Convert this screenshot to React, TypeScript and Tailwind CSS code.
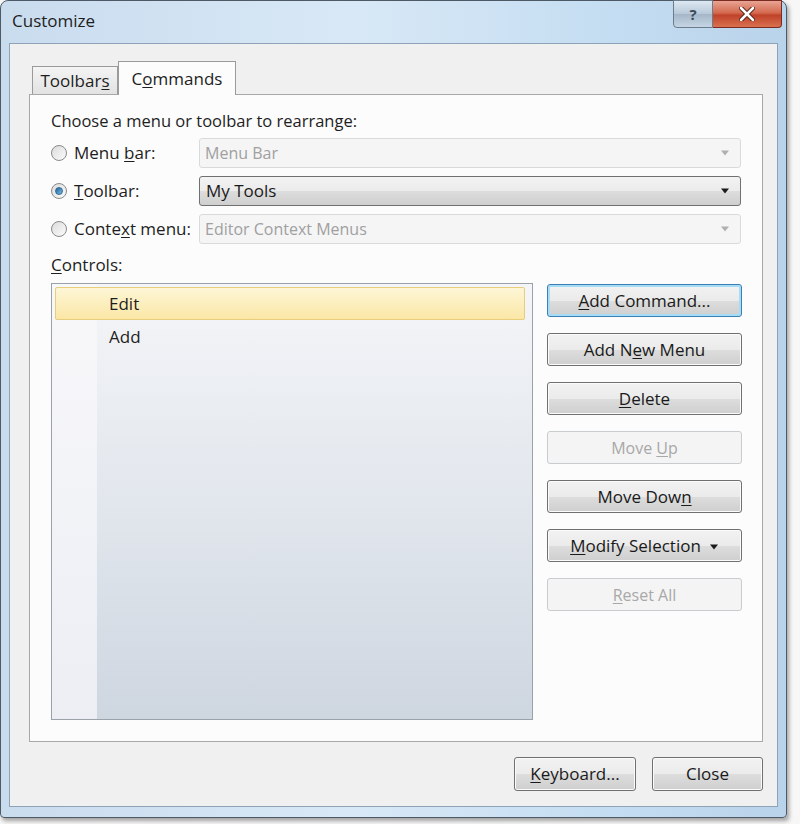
const font = { fontFamily: '"Open Sans", "Noto Sans", sans-serif' };

const U = ({ children }: { children: string }) => <span className="underline underline-offset-2">{children}</span>;

const Radio = ({ checked }: { checked?: boolean }) => (
  <span className="w-[16px] h-[16px] rounded-full border border-[#8a8a8a] bg-gradient-to-br from-[#dcdcdc] to-[#fbfbfb] flex items-center justify-center shrink-0">
    {checked && <span className="w-[8px] h-[8px] rounded-full bg-gradient-to-br from-[#1f5f8f] to-[#7ec0ea] border border-[#2d6c9c]" />}
  </span>
);

const Caret = ({ dim, className = "" }: { dim?: boolean; className?: string }) => (
  <svg width="10" height="6" viewBox="0 0 10 6" className={`shrink-0 ${className}`}>
    <path d="M1 0.5 L9 0.5 L5 5.5 Z" fill={dim ? "#b0b0b0" : "#1a1a1a"} />
  </svg>
);

const Select = ({ value, enabled }: { value: string; enabled?: boolean }) =>
  enabled ? (
    <div className="w-[542px] h-[30px] rounded-[3px] border border-[#707070] bg-[linear-gradient(#f3f3f3_0%,#ebebeb_50%,#dddddd_51%,#cfcfcf_100%)] flex items-center justify-between pl-[6px] pr-[10px] text-[17px] text-[#1a1a1a]">
      <span>{value}</span>
      <Caret />
    </div>
  ) : (
    <div className="w-[542px] h-[30px] rounded-[3px] border border-[#dadada] bg-[#f5f5f5] flex items-center justify-between pl-[5px] pr-[10px] text-[16px] text-[#a0a0a0]">
      <span>{value}</span>
      <Caret dim />
    </div>
  );

type BtnProps = { children: React.ReactNode; disabled?: boolean; focused?: boolean; className?: string };

const Btn = ({ children, disabled, focused, className = "" }: BtnProps) => {
  if (disabled)
    return (
      <div className={`h-[33px] rounded-[3px] border border-[#c9ccce] bg-[#f4f4f4] flex items-center justify-center text-[16px] text-[#a8a8a8] ${className}`}>
        <span>{children}</span>
      </div>
    );
  return (
    <div
      className={`h-[33px] rounded-[3px] border ${focused ? "border-[#3c7fb1] shadow-[inset_0_0_0_2px_#a6dcf5]" : "border-[#707070] shadow-[inset_0_0_0_1px_#fbfbfb]"} bg-[linear-gradient(#f2f2f2_0%,#ebebeb_50%,#dddddd_51%,#cfcfcf_100%)] flex items-center justify-center text-[17px] text-[#1a1a1a] ${className}`}
    >
      <span>{children}</span>
    </div>
  );
};

export default function App() {
  return (
    <div className="w-[800px] h-[824px] bg-[#f7f7f7] overflow-hidden" style={font}>
      <div className="w-[787px] h-[818px] rounded-t-[8px] rounded-b-[4px] border border-[#4d5a66] bg-[linear-gradient(90deg,#c9dcee_0%,#d8e8f6_45%,#c6def2_75%,#b9d3ea_100%)] flex flex-col shadow-[2px_3px_4px_rgba(0,0,0,0.35)]">
        {/* title bar */}
        <div className="h-[42px] flex items-start justify-between">
          <div className="pl-[11px] pt-[7px] text-[17px] text-[#1e1e1e]">Customize</div>
          <div className="flex mr-[4px] -mt-px">
            <div className="w-[40px] h-[28px] rounded-bl-[4px] border border-[#6b7c8c] bg-[linear-gradient(#dde8f2,#b8c8d8_50%,#a4b6c8_51%,#c5d5e4)] flex items-center justify-center text-[15px] font-bold text-[#3a4a5a]">
              ?
            </div>
            <div className="w-[69px] h-[28px] rounded-br-[4px] border border-l-0 border-[#7a2a20] bg-[linear-gradient(#e8a493,#d46a50_45%,#c0422a_55%,#d9714f)] flex items-center justify-center">
              <svg width="16" height="14" viewBox="0 0 16 14">
                <path d="M2 1 L14 13 M14 1 L2 13" stroke="#4a1a10" strokeWidth="4.5" strokeLinecap="round" />
                <path d="M2 1 L14 13 M14 1 L2 13" stroke="#ffffff" strokeWidth="2.6" strokeLinecap="round" />
              </svg>
            </div>
          </div>
        </div>

        {/* client */}
        <div className="mx-[8px] mb-[10px] flex-1 border border-[#8ea3b8] bg-[#f0f0f0] flex flex-col pl-[19px] pr-[14px] pt-[17px]">
          {/* tabs */}
          <div className="flex items-end h-[33px] pl-[3px] text-[17px] text-[#1e1e1e]">
            <div className="h-[28px] w-[86px] border border-b-0 border-[#9a9a9a] bg-[linear-gradient(#f4f4f4,#e2e2e2)] flex items-center justify-center">
              <span>Toolbar<U>s</U></span>
            </div>
            <div className="h-[34px] w-[118px] -mb-px border border-b-0 border-[#9a9a9a] bg-[#fcfcfc] flex items-center justify-center relative z-10">
              <span>C<U>o</U>mmands</span>
            </div>
          </div>

          {/* panel */}
          <div className="h-[648px] border border-[#a8a8a8] bg-[#fcfcfc] pl-[21px] pr-[20px] pt-[15px] flex flex-col text-[17px] text-[#1e1e1e]">
            <div className="h-[22px] leading-[22px] text-[16.5px]">Choose a menu or toolbar to rearrange:</div>

            <div className="mt-[6px] flex flex-col gap-[8px]">
              <div className="flex items-center">
                <div className="w-[148px] flex items-center gap-[7px]">
                  <Radio />
                  <span>Menu <U>b</U>ar:</span>
                </div>
                <Select value="Menu Bar" />
              </div>
              <div className="flex items-center">
                <div className="w-[148px] flex items-center gap-[7px]">
                  <Radio checked />
                  <span><U>T</U>oolbar:</span>
                </div>
                <Select value="My Tools" enabled />
              </div>
              <div className="flex items-center">
                <div className="w-[148px] flex items-center gap-[7px]">
                  <Radio />
                  <span>Conte<U>x</U>t menu:</span>
                </div>
                <Select value="Editor Context Menus" />
              </div>
            </div>

            <div className="mt-[10px] h-[22px] leading-[22px]"><U>C</U>ontrols:</div>

            <div className="mt-[7px] flex gap-[14px]">
              {/* list */}
              <div className="w-[482px] h-[437px] border border-[#9ba1a8] flex relative bg-[linear-gradient(#f4f5f8,#e2e7ed_50%,#ced6e0)]">
                <div className="w-[45px] h-full bg-[linear-gradient(#f8f8fa,#eceef4)]" />
                <div className="absolute left-[3px] right-[7px] top-[3px] flex flex-col">
                  <div className="h-[33px] border border-[#e8cd7a] rounded-[2px] bg-[linear-gradient(#fdf6d6,#fbe7a6)] flex items-center pl-[53px]">
                    Edit
                  </div>
                  <div className="h-[33px] flex items-center pl-[54px]">Add</div>
                </div>
              </div>

              {/* buttons */}
              <div className="w-[195px] flex flex-col gap-[16px] mt-[1px]">
                <Btn focused><U>A</U>dd Command...</Btn>
                <Btn>Add N<U>e</U>w Menu</Btn>
                <Btn><U>D</U>elete</Btn>
                <Btn disabled>Move <U>U</U>p</Btn>
                <Btn>Move Dow<U>n</U></Btn>
                <Btn>
                  <U>M</U>odify Selection
                  <Caret className="inline-block ml-[8px] align-middle" />
                </Btn>
                <Btn disabled><U>R</U>eset All</Btn>
              </div>
            </div>
          </div>

          {/* bottom buttons */}
          <div className="flex justify-end gap-[16px] mt-[15px]">
            <Btn className="w-[122px] h-[34px]"><U>K</U>eyboard...</Btn>
            <Btn className="w-[111px] h-[34px]">Close</Btn>
          </div>
        </div>
      </div>
    </div>
  );
}
